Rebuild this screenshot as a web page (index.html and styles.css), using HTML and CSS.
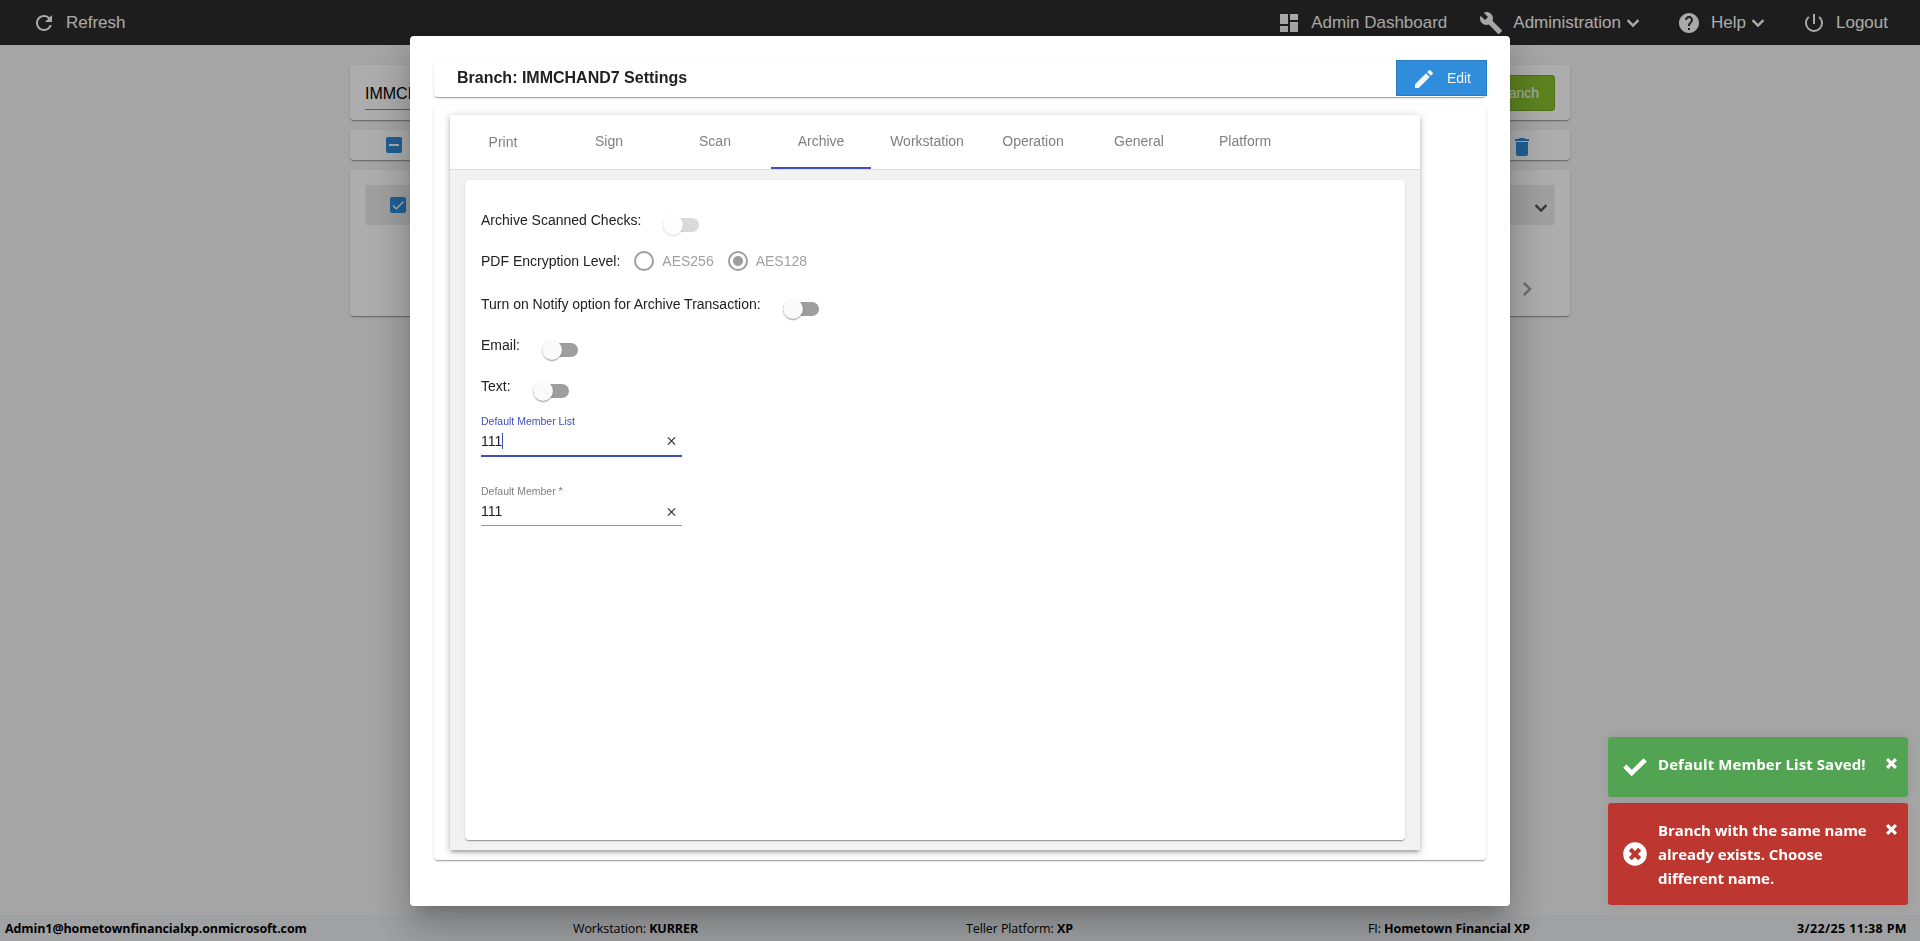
FILE: index.html
```html
<!DOCTYPE html>
<html lang="en">
  <head>
    <meta charset="UTF-8" />
    <meta name="viewport" content="width=device-width, initial-scale=1.0" />
    <title>Branch Settings</title>
    <link rel="stylesheet" href="styles.css">
  </head>
  <body>
    <header class="toolbar">
      <a class="nav-item">
        <svg class="icon" viewBox="0 0 24 24"><path d="M17.65 6.35A7.958 7.958 0 0 0 12 4c-4.42 0-7.99 3.58-7.99 8s3.57 8 7.99 8c3.73 0 6.84-2.55 7.73-6h-2.08A5.99 5.99 0 0 1 12 18c-3.31 0-6-2.69-6-6s2.69-6 6-6c1.66 0 3.14.69 4.22 1.78L13 11h7V4l-2.35 2.35z"/></svg>
        <span>Refresh</span>
      </a>
      <nav class="nav">
        <a class="nav-item">
          <svg class="icon" viewBox="0 0 24 24"><path d="M3 13h8V3H3v10zm0 8h8v-6H3v6zm10 0h8V11h-8v10zm0-18v6h8V3h-8z"/></svg>
          <span>Admin Dashboard</span>
        </a>
        <a class="nav-item">
          <svg class="icon" viewBox="0 0 24 24"><path d="M22.7 19l-9.1-9.1c.9-2.3.4-5-1.5-6.9-2-2-5-2.4-7.4-1.3L9 6 6 9 1.6 4.7C.4 7.1.9 10.1 2.9 12.1c1.9 1.9 4.6 2.4 6.9 1.5l9.1 9.1c.4.4 1 .4 1.4 0l2.3-2.3c.5-.4.5-1.1.1-1.4z"/></svg>
          <span>Administration</span>
          <svg class="icon arrow" viewBox="0 0 24 24"><path d="M7.41 8.59L12 13.17l4.59-4.58L18 10l-6 6-6-6z"/></svg>
        </a>
        <a class="nav-item">
          <svg class="icon" viewBox="0 0 24 24"><path d="M12 2C6.48 2 2 6.48 2 12s4.48 10 10 10 10-4.48 10-10S17.52 2 12 2zm1 17h-2v-2h2v2zm2.07-7.75l-.9.92C13.45 12.9 13 13.5 13 15h-2v-.5c0-1.1.45-2.1 1.17-2.83l1.24-1.26c.37-.36.59-.86.59-1.41 0-1.1-.9-2-2-2s-2 .9-2 2H8c0-2.21 1.79-4 4-4s4 1.79 4 4c0 .88-.36 1.68-.93 2.25z"/></svg>
          <span>Help</span>
          <svg class="icon arrow" viewBox="0 0 24 24"><path d="M7.41 8.59L12 13.17l4.59-4.58L18 10l-6 6-6-6z"/></svg>
        </a>
        <a class="nav-item">
          <svg class="icon" viewBox="0 0 24 24"><path d="M13 3h-2v10h2V3zm4.83 2.17l-1.42 1.42A6.92 6.92 0 0 1 19 12c0 3.87-3.13 7-7 7s-7-3.13-7-7c0-2.19 1.01-4.14 2.58-5.42L6.17 5.17A8.932 8.932 0 0 0 3 12a9 9 0 0 0 18 0c0-2.74-1.23-5.18-3.17-6.83z"/></svg>
          <span>Logout</span>
        </a>
      </nav>
    </header>

    <main class="page">
      <section class="card search-card">
        <div class="search-input">IMMCHAND7</div>
        <button class="add-btn">Add Branch</button>
      </section>
      <section class="card actions-card">
        <span class="checkbox"><svg viewBox="0 0 16 16"><path d="M3 8h10" /></svg></span>
        <svg class="icon trash" viewBox="0 0 24 24"><path d="M6 19c0 1.1.9 2 2 2h8c1.1 0 2-.9 2-2V7H6v12zM19 4h-3.5l-1-1h-5l-1 1H5v2h14V4z"/></svg>
      </section>
      <section class="card list-card">
        <div class="list-row">
          <span class="checkbox"><svg class="tick" viewBox="0 0 16 16"><path d="M3 8.5l3.3 3.3L13.5 4.5" /></svg></span>
          <svg class="icon arrow" viewBox="0 0 24 24"><path d="M7.41 8.59L12 13.17l4.59-4.58L18 10l-6 6-6-6z"/></svg>
        </div>
        <div class="paginator">
          <svg viewBox="0 0 24 24"><path d="M10 6L8.59 7.41 13.17 12l-4.58 4.59L10 18l6-6z"/></svg>
        </div>
      </section>
    </main>

    <footer class="status-bar">
      <span><b class="user">Admin1@hometownfinancialxp.onmicrosoft.com</b></span>
      <span>Workstation: <b>KURRER</b></span>
      <span>Teller Platform: <b>XP</b></span>
      <span>FI: <b>Hometown Financial XP</b></span>
      <span><b class="date">3/22/25 11:38 PM</b></span>
    </footer>

    <div class="backdrop">
      <div class="dialog">
        <div class="card dialog-header">
          <h1>Branch: IMMCHAND7 Settings</h1>
          <button class="edit-btn">
            <svg class="icon" viewBox="0 0 24 24"><path d="M3 17.25V21h3.75L17.81 9.94l-3.75-3.75L3 17.25zM20.71 7.04a.996.996 0 0 0 0-1.41l-2.34-2.34a.996.996 0 0 0-1.41 0l-1.83 1.83 3.75 3.75 1.83-1.83z"/></svg>
            <span>Edit</span>
          </button>
        </div>

        <div class="card dialog-body">
          <div class="tab-box">
            <div class="tabs">
              <a class="tab first">Print</a>
              <a class="tab">Sign</a>
              <a class="tab">Scan</a>
              <a class="tab active">Archive</a>
              <a class="tab">Workstation</a>
              <a class="tab">Operation</a>
              <a class="tab">General</a>
              <a class="tab">Platform</a>
            </div>
            <div class="card tab-content">
              <div class="row">
                <span>Archive Scanned Checks:</span>
                <span class="toggle disabled"></span>
              </div>
              <div class="row encryption">
                <span>PDF Encryption Level:</span>
                <span class="radio"></span>
                <span class="radio-label">AES256</span>
                <span class="radio checked"></span>
                <span class="radio-label">AES128</span>
              </div>
              <div class="row">
                <span>Turn on Notify option for Archive Transaction:</span>
                <span class="toggle"></span>
              </div>
              <div class="row">
                <span>Email:</span>
                <span class="toggle"></span>
              </div>
              <div class="row">
                <span>Text:</span>
                <span class="toggle"></span>
              </div>
              <div class="field focused">
                <label>Default Member List</label>
                <div class="field-value">
                  <span class="value">111</span>
                  <svg class="clear" viewBox="0 0 10 10"><path d="M1 1l8 8M9 1l-8 8" /></svg>
                </div>
              </div>
              <div class="field">
                <label>Default Member *</label>
                <div class="field-value">
                  <span class="value">111</span>
                  <svg class="clear" viewBox="0 0 10 10"><path d="M1 1l8 8M9 1l-8 8" /></svg>
                </div>
              </div>
            </div>
          </div>
        </div>
      </div>
    </div>

    <div class="toasts">
      <div class="toast success">
        <svg class="toast-icon" viewBox="0 0 24 24"><path d="M1.8 11.2l6.9 6.9L22.2 4.800" fill="none" stroke="#fff" stroke-width="4.6"/></svg>
        <p>Default Member List Saved!</p>
        <svg class="toast-close" viewBox="0 0 10 10"><path d="M1 1l8 8M9 1l-8 8" /></svg>
      </div>
      <div class="toast error">
        <svg class="toast-icon" viewBox="0 0 24 24"><circle cx="12" cy="12" r="11.8" fill="#fff"/><path d="M7.3 7.3l9.4 9.4M16.7 7.3l-9.4 9.4" stroke="#bd362f" stroke-width="4.2"/></svg>
        <p>Branch with the same name already exists. Choose different name.</p>
        <svg class="toast-close" viewBox="0 0 10 10"><path d="M1 1l8 8M9 1l-8 8" /></svg>
      </div>
    </div>
  </body>
</html>
```
FILE: styles.css
```css
* {
  box-sizing: border-box;
}

body {
  margin: 0;
  height: 100vh;
  display: flex;
  flex-direction: column;
  overflow: hidden;
  background-color: #f3f3f3;
  font-family: "Liberation Sans", Arial, sans-serif;
  font-size: 14px;
  color: #212121;
}

.icon {
  width: 24px;
  height: 24px;
  fill: currentColor;
  flex-shrink: 0;
}

.arrow {
  stroke: currentColor;
  stroke-width: 0.6;
}

/* top bar */
.toolbar {
  height: 45px;
  padding: 1px 32px 0;
  display: flex;
  justify-content: space-between;
  align-items: center;
  background-color: #2c2c2c;
  color: #fafafa;
}

.nav {
  display: flex;
  gap: 32px;
}

.nav-item {
  display: flex;
  align-items: center;
  gap: 10px;
  font-size: 17px;
  line-height: 24px;
}

.nav-item .arrow {
  margin-left: -10px;
}

/* page behind the dialog */
.page {
  width: 1220px;
  margin: 20px auto 0;
  flex: 1;
  display: flex;
  flex-direction: column;
  gap: 10px;
}

.card {
  background-color: white;
  border-radius: 4px;
  box-shadow: 0 2px 1px -1px rgba(0, 0, 0, 0.2), 0 1px 1px 0 rgba(0, 0, 0, 0.14),
    0 1px 3px 0 rgba(0, 0, 0, 0.12);
}

.search-card {
  height: 55px;
  padding: 10px 15px;
  display: flex;
  justify-content: space-between;
}

.search-input {
  width: 300px;
  height: 35px;
  padding-top: 10px;
  font-size: 16px;
  border-bottom: 1px solid #8a8a8a;
  color: black;
}

.add-btn {
  width: 130px;
  height: 36px;
  padding: 0 15px;
  border: 1px solid #76a628;
  border-radius: 3px;
  background-color: #8ac12f;
  color: white;
  font-family: inherit;
  font-size: 14px;
  text-align: right;
}

.actions-card {
  height: 30px;
  padding: 0 41px 0 36px;
  display: flex;
  justify-content: space-between;
  align-items: center;
}

.checkbox {
  width: 16px;
  height: 16px;
  border-radius: 2px;
  background-color: #308ddc;
}

.checkbox svg {
  display: block;
  fill: none;
  stroke: white;
  stroke-width: 2;
}

.checkbox .tick {
  stroke-width: 1.5;
}

.trash {
  margin: 3px -5px 0 0;
  color: #308ddc;
}

.list-card {
  height: 146px;
  padding: 15px;
}

.list-row {
  height: 40px;
  padding: 0 2px 0 25px;
  display: flex;
  justify-content: space-between;
  align-items: center;
  background-color: #ececec;
  color: #555;
}

.list-row .icon {
  margin-top: 5px;
}

.paginator {
  display: flex;
  justify-content: flex-end;
  padding: 50px 14px 0 0;
}

.paginator svg {
  width: 28px;
  height: 28px;
  fill: #a0a0a0;
}

.status-bar {
  height: 26px;
  padding: 0 13px 0 5px;
  display: grid;
  grid-template-columns: 568px 393px 402px 1fr auto;
  align-items: center;
  background-color: #ebedef;
  font-family: "Open Sans", sans-serif;
  font-size: 12.5px;
  letter-spacing: -0.1px;
  color: black;
}

.date {
  letter-spacing: 0.35px;
}

/* dialog */
.backdrop {
  position: fixed;
  inset: 0;
  display: flex;
  justify-content: center;
  align-items: center;
  background-color: rgba(0, 0, 0, 0.32);
}

.dialog {
  width: 1100px;
  height: 870px;
  padding: 24px;
  border-radius: 4px;
  background-color: white;
  box-shadow: 0 11px 15px -7px rgba(0, 0, 0, 0.2),
    0 24px 38px 3px rgba(0, 0, 0, 0.14), 0 9px 46px 8px rgba(0, 0, 0, 0.12);
}

.dialog-header {
  width: 1052px;
  height: 37px;
  display: flex;
  justify-content: space-between;
}

.dialog-header h1 {
  margin: 0;
  padding-left: 23px;
  font-size: 16px;
  line-height: 35px;
}

.edit-btn {
  width: 91px;
  height: 36px;
  margin-right: -1px;
  padding: 0 15px;
  display: flex;
  align-items: center;
  justify-content: space-between;
  border: 1px solid #2a7bc0;
  background-color: #308ddc;
  color: #f5f5f5;
  font-family: inherit;
  font-size: 14px;
}

.edit-btn .icon {
  margin-top: 3px;
}

.dialog-body {
  width: 1052px;
  height: 755px;
  margin-top: 8px;
  padding: 10px 16px;
}

.tab-box {
  width: 970px;
  height: 735px;
  background-color: #f2f2f2;
  box-shadow: 0 3px 3px -2px rgba(0, 0, 0, 0.2), 0 3px 4px 0 rgba(0, 0, 0, 0.14),
    0 1px 8px 0 rgba(0, 0, 0, 0.2);
}

.tabs {
  height: 55px;
  display: flex;
  border-bottom: 1px solid #ddd;
  background-color: white;
}

.tab {
  width: 100px;
  margin: 0 3px;
  line-height: 52px;
  text-align: center;
  color: #808080;
}

.tab.first {
  line-height: 54px;
}

.tab.active {
  border-bottom: 2px solid #3f51b5;
}

.tab-content {
  width: 940px;
  height: 660px;
  margin: 10px 15px;
  padding: 20px 16px;
}

.row {
  height: 41px;
  display: flex;
  align-items: center;
}

.row:first-child {
  height: 40px;
}

.toggle {
  position: relative;
  width: 36px;
  height: 14px;
  margin: 10px 0 0 22px;
  border-radius: 8px;
  background-color: #9e9e9e;
}

.toggle::before {
  content: "";
  position: absolute;
  left: 0;
  top: -3px;
  width: 20px;
  height: 20px;
  border-radius: 50%;
  background-color: #fafafa;
  box-shadow: 0 2px 1px -1px rgba(0, 0, 0, 0.2), 0 1px 1px 0 rgba(0, 0, 0, 0.14),
    0 1px 3px 0 rgba(0, 0, 0, 0.12);
}

.toggle.disabled {
  background-color: #dadada;
}

.toggle.disabled::before {
  background-color: #fdfdfd;
  box-shadow: 0 1px 2px rgba(0, 0, 0, 0.15);
}

.encryption {
  margin: 1px 0 2px;
}

.radio {
  width: 20px;
  height: 20px;
  margin-left: 14px;
  border: 2px solid #9e9e9e;
  border-radius: 50%;
}

.radio.checked {
  background: radial-gradient(circle, #9e9e9e 4.5px, transparent 5.5px);
}

.radio-label {
  margin-left: 8px;
  color: #a0a0a0;
}

.field {
  width: 201px;
  height: 70px;
  padding-top: 8px;
}

.field label {
  display: block;
  font-size: 10.5px;
  line-height: 12px;
  color: #808080;
}

.field-value {
  height: 29px;
  padding: 6px 6px 0 0;
  display: flex;
  justify-content: space-between;
  border-bottom: 1px solid #949494;
}

.value {
  height: 16px;
  line-height: 16px;
}

.clear {
  width: 9px;
  height: 10px;
  margin-top: 4px;
  fill: none;
  stroke: #333;
  stroke-width: 1.4;
}

.focused label {
  color: #3f51b5;
}

.focused .field-value {
  height: 30px;
  border-bottom: 2px solid #3f51b5;
}

.focused .value {
  border-right: 1px solid #3f51b5;
}

.focused .clear {
  margin-top: 3px;
}

/* notifications */
.toasts {
  position: fixed;
  right: 12px;
  bottom: 36px;
  width: 300px;
  display: flex;
  flex-direction: column;
  gap: 6px;
}

.toast {
  min-height: 60px;
  padding: 15px 11px 15px 15px;
  display: flex;
  align-items: center;
  border-radius: 3px;
  box-shadow: 0 0 12px rgba(0, 0, 0, 0.08);
  color: white;
  font-family: "Open Sans", sans-serif;
  font-size: 15px;
  font-weight: bold;
  line-height: 24px;
}

.toast p {
  width: 215px;
  margin: -1px 0 0 11px;
  letter-spacing: -0.08px;
}

.toast.success p {
  margin-top: -7px;
  letter-spacing: 0.07px;
}

.success {
  background-color: #52a352;
}

.error {
  height: 102px;
  background-color: #bd362f;
}

.toast-icon {
  width: 24px;
  height: 24px;
  flex-shrink: 0;
}

.toast-close {
  width: 11px;
  height: 11px;
  margin: 6px 0 0 auto;
  align-self: flex-start;
  stroke: white;
  stroke-width: 2.8;
}
```
